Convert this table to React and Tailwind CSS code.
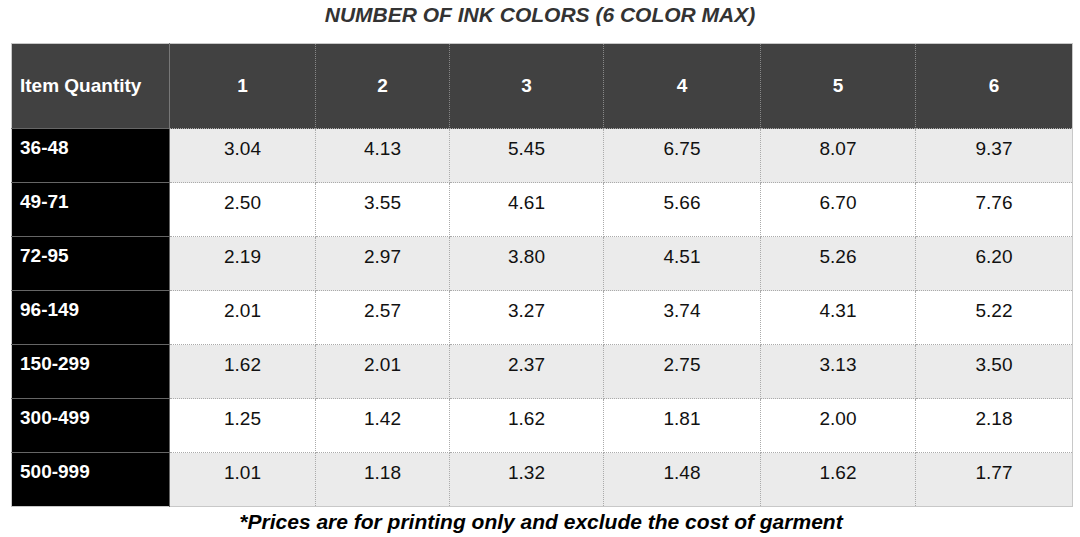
import React from 'react';

const colWidths = ['w-[158px]', 'w-[146px]', 'w-[134px]', 'w-[154px]', 'w-[157px]', 'w-[155px]', 'w-[157px]'];

const rows = [
  ['36-48', '3.04', '4.13', '5.45', '6.75', '8.07', '9.37'],
  ['49-71', '2.50', '3.55', '4.61', '5.66', '6.70', '7.76'],
  ['72-95', '2.19', '2.97', '3.80', '4.51', '5.26', '6.20'],
  ['96-149', '2.01', '2.57', '3.27', '3.74', '4.31', '5.22'],
  ['150-299', '1.62', '2.01', '2.37', '2.75', '3.13', '3.50'],
  ['300-499', '1.25', '1.42', '1.62', '1.81', '2.00', '2.18'],
  ['500-999', '1.01', '1.18', '1.32', '1.48', '1.62', '1.77'],
];

// Price table for screen printing
export default function App() {
  return (
    <div className="w-[1080px] h-[537px] bg-white font-['Liberation_Sans',Arial,sans-serif] overflow-hidden">
      <h1 className="text-center text-[21px] leading-[24px] font-bold italic text-[#333] pt-[3px] h-[43px]">
        NUMBER OF INK COLORS (6 COLOR MAX)
      </h1>
      <table className="ml-[11px] border-collapse table-fixed w-[1061px] border border-[#c8c8c8]">
        <colgroup>
          {colWidths.map((w, i) => (
            <col key={i} className={w} />
          ))}
        </colgroup>
        <thead>
          <tr className="h-[85px] bg-[#414141] text-white">
            <th className="text-left pl-[8px] text-[19px] font-bold border-r border-[#777]">Item Quantity</th>
            {[1, 2, 3, 4, 5, 6].map((n) => (
              <th key={n} className="text-center text-[19px] font-bold border-l border-dotted border-[#888]">
                {n}
              </th>
            ))}
          </tr>
        </thead>
        <tbody>
          {rows.map((row, i) => (
            <tr key={row[0]} className={i % 2 === 0 ? 'h-[54px] bg-[#ebebeb]' : 'h-[54px] bg-white'}>
              <td className="align-top pt-[8px] pl-[8px] bg-black text-white font-bold text-[19px] leading-[22px] border-t border-r border-[#666]">
                {row[0]}
              </td>
              {row.slice(1).map((v, j) => (
                <td
                  key={j}
                  className="align-top pt-[9px] text-center text-[19px] leading-[22px] text-[#111] border border-dotted border-[#aaa]"
                >
                  {v}
                </td>
              ))}
            </tr>
          ))}
        </tbody>
      </table>
      <p className="text-center text-[21px] leading-[24px] font-bold italic text-black pt-[3px] pl-[2px]">
        *Prices are for printing only and exclude the cost of garment
      </p>
    </div>
  );
}
